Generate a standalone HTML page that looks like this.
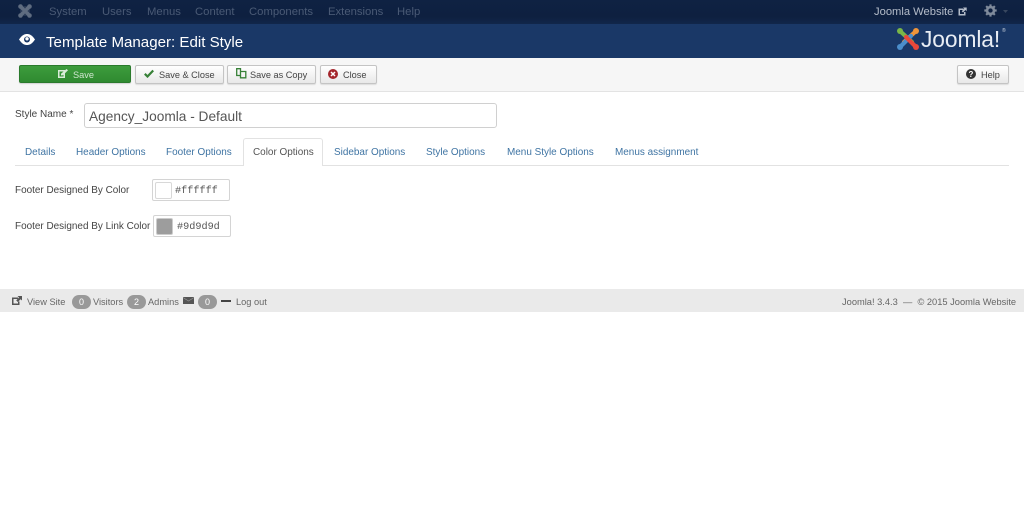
<!DOCTYPE html>
<html><head><meta charset="utf-8"><style>
html,body{margin:0;padding:0;background:#fff;width:1024px;height:505px;overflow:hidden;position:relative;font-family:"Liberation Sans",sans-serif}
div,span.a,svg{position:absolute}
.t{position:absolute;white-space:nowrap;line-height:14px}
.n{top:5px;font-size:11.3px;color:#4a5a75}
.b{position:absolute;top:65px;height:17px;box-sizing:content-box;border:1px solid #c4c4c4;border-radius:2px;background:linear-gradient(#fff,#e8e8e8);box-shadow:0 1px 1px rgba(0,0,0,.1)}
.bt{top:67.500px;font-size:9.2px;color:#444}
.tab{top:146px;font-size:9.95px;color:#3f74a3}
.lb{font-size:9.95px;color:#444}
.ft{top:294.500px;font-size:9.25px;color:#666}
.badge{position:absolute;top:295px;height:14px;width:19px;border-radius:8px;background:#999;color:#fff;font-size:9px;line-height:14px;text-align:center}
</style></head><body>
<div style="left:0;top:0;width:1024px;height:24px;background:linear-gradient(#0f2243,#0e2040 70%,#11264a)"></div>
<div style="left:0;top:24px;width:1024px;height:34px;background:#1a3867"></div>
<div style="left:0;top:58px;width:1024px;height:34px;background:#f6f6f6;border-bottom:1px solid #e3e3e3;box-sizing:border-box"></div>

<svg style="left:18px;top:4px" width="14" height="14" viewBox="0 0 14 14"><g fill="none" stroke="#5f6c80" stroke-width="3.600"><path d="M3 3L11 11M11 3L3 11"/></g><path d="M3 3H11V11H3Z" fill="none" stroke="#5f6c80" stroke-width="1" opacity=".6"/><g fill="#5f6c80"><circle cx="2.500" cy="2.500" r="2.300"/><circle cx="11.500" cy="2.500" r="2.300"/><circle cx="2.500" cy="11.500" r="2.300"/><circle cx="11.500" cy="11.500" r="2.300"/></g></svg>
<span class="t n" style="left:49px">System</span>
<span class="t n" style="left:102px">Users</span>
<span class="t n" style="left:147px">Menus</span>
<span class="t n" style="left:195px">Content</span>
<span class="t n" style="left:249px">Components</span>
<span class="t n" style="left:328px">Extensions</span>
<span class="t n" style="left:397px">Help</span>
<span class="t" style="left:874px;top:5px;font-size:11.2px;color:#b4bcc9">Joomla Website</span>
<svg style="left:958px;top:7px" width="9" height="9" viewBox="0 0 9 9"><path d="M.5 1.500H5.500V3H2V7H6V5H7.500V8.500H.5Z" fill="#b4bcc9"/><path d="M5 .5H8.700V4.200L7.500 3L5 5.500L3.700 4.200L6.200 1.700Z" fill="#b4bcc9"/></svg>
<svg style="left:984px;top:4px" width="13" height="13" viewBox="0 0 12 12"><circle cx="6" cy="6" r="3.200" fill="none" stroke="#7f8a9b" stroke-width="2.400"/><path d="M6 .3V3M6 9V11.700M.3 6H3M9 6H11.700M2 2L3.800 3.800M8.200 8.200L10 10M2 10L3.800 8.200M8.200 3.800L10 2" stroke="#7f8a9b" stroke-width="2"/></svg>
<svg style="left:1003px;top:10px" width="5" height="3" viewBox="0 0 5 3"><path d="M0 0H5L2.500 3Z" fill="#38475f"/></svg>

<svg style="left:19px;top:34px" width="16" height="11" viewBox="0 0 16 11"><path d="M0 5.500C3 1 5.500 0 8 0S13 1 16 5.500C13 10 10.500 11 8 11S3 10 0 5.500Z" fill="#fff"/><circle cx="8" cy="5.500" r="3" fill="#1a3867"/><circle cx="8" cy="4.800" r="1.700" fill="#fff"/></svg>
<span class="t" style="left:46px;top:33.500px;font-size:15.1px;line-height:17px;color:#fff">Template Manager: Edit Style</span>

<svg style="left:896px;top:27px" width="24" height="24" viewBox="0 0 24 24" fill="none" stroke-width="4.200" stroke-linecap="round"><path d="M5 5L16 15" stroke="#7ab648"/><path d="M19 5L8 15" stroke="#f0953a"/><path d="M5 19L15 9" stroke="#4b8ecb"/><path d="M19 19L10 10" stroke="#e8483a"/><circle cx="4" cy="4" r="3" fill="#7ab648" stroke="none"/><circle cx="20" cy="4" r="3" fill="#f0953a" stroke="none"/><circle cx="4" cy="20" r="3" fill="#4b8ecb" stroke="none"/><circle cx="20" cy="20" r="3" fill="#e8483a" stroke="none"/></svg>
<span class="t" style="left:921px;top:26px;font-size:22.8px;line-height:26px;color:#e8edf4;letter-spacing:-.1px">Joomla!</span>
<span class="t" style="left:1002px;top:28px;font-size:5px;line-height:6px;color:#cfd6e0">®</span>

<div style="left:19px;top:65px;width:112px;height:18px;border-radius:2px;background:linear-gradient(#3d9c3d,#2f8a30);border:1px solid #2a7a2c;box-sizing:border-box;box-shadow:0 1px 1px rgba(0,0,0,.15)"></div>
<svg style="left:58px;top:69px" width="10" height="9" viewBox="0 0 10 9"><path d="M0 1H7V9H0ZM1.500 2.500V7.500H5.500V2.500Z" fill="#d9ecd9"/><path d="M3 4.800L8.500 0L10 1.300L5 6.300L3 6.500Z" fill="#d9ecd9"/></svg>
<span class="t bt" style="left:73px;color:#cfe6cf">Save</span>

<div class="b" style="left:135px;width:87px"></div>
<svg style="left:144px;top:69px" width="10" height="9" viewBox="0 0 10 9"><path d="M.8 4.800L3.500 7.500L9.200 1.500" fill="none" stroke="#378137" stroke-width="2.200"/></svg>
<span class="t bt" style="left:159px">Save &amp; Close</span>

<div class="b" style="left:227px;width:87px"></div>
<svg style="left:236px;top:68px" width="11" height="11" viewBox="0 0 11 11"><path d="M.7 .7H4.500V7.500H.7ZM4.500 3.500H9.800V9.800H4.500V7.500" fill="none" stroke="#378137" stroke-width="1.300"/></svg>
<span class="t bt" style="left:250px">Save as Copy</span>

<div class="b" style="left:320px;width:55px"></div>
<svg style="left:328px;top:69px" width="10" height="10" viewBox="0 0 10 10"><circle cx="5" cy="5" r="5" fill="#a4262c"/><path d="M3 3L7 7M7 3L3 7" stroke="#fff" stroke-width="1.500"/></svg>
<span class="t bt" style="left:343px">Close</span>

<div class="b" style="left:957px;width:50px"></div>
<svg style="left:966px;top:69px" width="10" height="10" viewBox="0 0 10 10"><circle cx="5" cy="5" r="5" fill="#333"/><text x="5" y="8" font-size="8" font-weight="700" fill="#fff" text-anchor="middle" font-family="Liberation Sans">?</text></svg>
<span class="t bt" style="left:981px">Help</span>

<span class="t lb" style="left:15px;top:108px;font-size:10px">Style Name *</span>
<div style="left:84px;top:103px;width:413px;height:25px;box-sizing:border-box;border:1px solid #d0d0d0;border-radius:3px;background:#fff"></div>
<span class="t" style="left:89px;top:108.500px;font-size:13.7px;line-height:16px;color:#555">Agency_Joomla - Default</span>

<div style="left:15px;top:165px;width:994px;height:1px;background:#e2e2e2"></div>
<div style="left:243px;top:138px;width:80px;height:28px;box-sizing:border-box;border:1px solid #e2e2e2;border-bottom:0;border-radius:3px 3px 0 0;background:#fff"></div>
<span class="t tab" style="left:25px">Details</span>
<span class="t tab" style="left:76px">Header Options</span>
<span class="t tab" style="left:166px">Footer Options</span>
<span class="t tab" style="left:253px;color:#555">Color Options</span>
<span class="t tab" style="left:334px">Sidebar Options</span>
<span class="t tab" style="left:426px">Style Options</span>
<span class="t tab" style="left:507px">Menu Style Options</span>
<span class="t tab" style="left:615px">Menus assignment</span>

<span class="t lb" style="left:15px;top:184px">Footer Designed By Color</span>
<div style="left:152px;top:179px;width:78px;height:22px;box-sizing:border-box;border:1px solid #d4d4d4;border-radius:2px"></div>
<div style="left:155px;top:182px;width:17px;height:17px;box-sizing:border-box;border:1px solid #d8d8d8;border-radius:2px;background:#fff"></div>
<span class="t" style="left:175px;top:185px;font-size:10.2px;color:#555;font-family:'Liberation Mono',monospace">#ffffff</span>

<span class="t lb" style="left:15px;top:220px">Footer Designed By Link Color</span>
<div style="left:153px;top:215px;width:78px;height:22px;box-sizing:border-box;border:1px solid #d4d4d4;border-radius:2px"></div>
<div style="left:156px;top:218px;width:17px;height:17px;box-sizing:border-box;border:1px solid #ccc;border-radius:2px;background:#9d9d9d"></div>
<span class="t" style="left:177px;top:221px;font-size:10.2px;color:#555;font-family:'Liberation Mono',monospace">#9d9d9d</span>

<div style="left:0;top:289px;width:1024px;height:23px;background:#eaeaea"></div>
<svg style="left:12px;top:296px" width="10" height="9" viewBox="0 0 10 9"><path d="M0 1.500H6V3H1.500V7.500H6V5.500H7.500V9H0Z" fill="#555"/><path d="M5.500 0H10V4.500L8.600 3.200L5.800 6L4.200 4.400L7 1.500Z" fill="#555"/></svg>
<span class="t ft" style="left:27px">View Site</span>
<span class="badge" style="left:72px">0</span>
<span class="t ft" style="left:93px">Visitors</span>
<span class="badge" style="left:127px">2</span>
<span class="t ft" style="left:148px">Admins</span>
<svg style="left:183px;top:297px" width="11" height="7" viewBox="0 0 11 7"><rect width="11" height="7" fill="#555"/><path d="M0 .5L5.500 4L11 .5" fill="none" stroke="#999" stroke-width=".6"/></svg>
<span class="badge" style="left:198px">0</span>
<div style="left:221px;top:300px;width:10px;height:2px;background:#444"></div>
<span class="t ft" style="left:236px">Log out</span>
<span class="t ft" style="left:842px;font-size:9.3px">Joomla! 3.4.3 &nbsp;— &nbsp;© 2015 Joomla Website</span>
</body></html>
